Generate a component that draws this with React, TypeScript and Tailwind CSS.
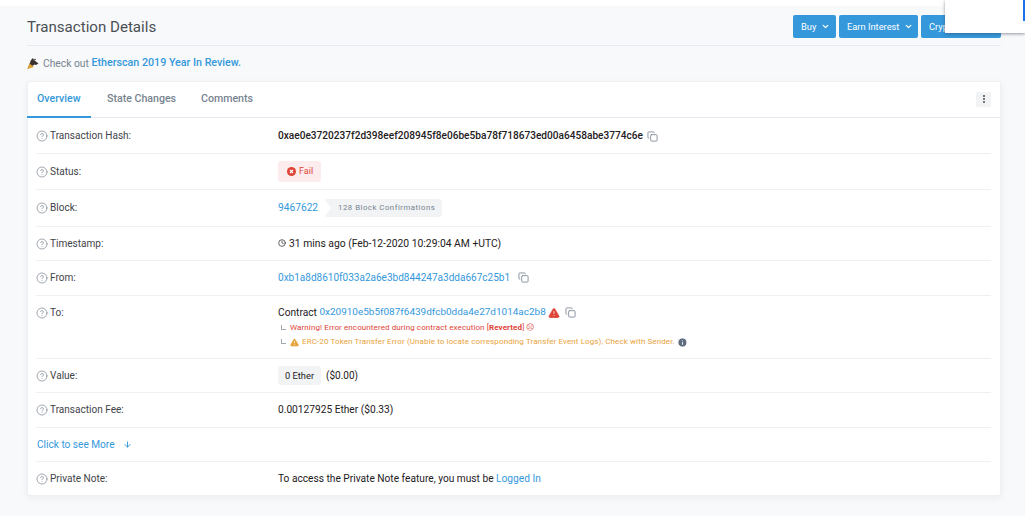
import { ArrowDown, ChevronDown, Clock, Copy, EllipsisVertical, Info, TriangleAlert, CircleHelp } from 'lucide-react';
import type { ReactNode } from 'react';

function Label({ text }: { text: string }) {
  return (
    <div className="w-[242px] shrink-0 flex items-center text-[10.05px] text-[#3f444a]">
      <CircleHelp size={12} strokeWidth={1.4} className="text-[#77838f] mr-[2px]" />
      <span>{text}</span>
    </div>
  );
}

function Row({ label, height, children, top }: { label: string; height: string; children: ReactNode; top?: boolean }) {
  return (
    <div className={`${height} flex ${top ? 'items-start pt-[9px]' : 'items-center'} border-b border-[#eef0f3]`}>
      <Label text={label} />
      <div className="flex-1 min-w-0">{children}</div>
    </div>
  );
}

function CopyIcon({ className }: { className: string }) {
  return <Copy size={11} strokeWidth={1.8} className={`text-[#77838f] ${className}`} />;
}

function NavButton({ label, className }: { label: string; className: string }) {
  return (
    <div className={`h-[23px] flex items-center whitespace-nowrap bg-[#3498db] rounded-[2px] text-white text-[9.3px] ${className}`}>
      <span>{label}</span>
      <ChevronDown size={9} strokeWidth={3.5} className="ml-[5px]" />
    </div>
  );
}

export default function App() {
  return (
    <div className="relative w-[1025px] h-[516px] overflow-hidden bg-white font-['Roboto',sans-serif]">
      <div className="mt-[6px] h-[510px] bg-[#f8f9fa] pl-[27px] pr-[24px] pt-[2px]">
        <div className="h-[38px] flex items-center justify-between border-b border-[#e7eaf3]">
          <h1 className="text-[15.1px] text-[#4a4f55] mt-[1px]">Transaction Details</h1>
          <div className="flex gap-[3px]">
            <NavButton label="Buy" className="w-[43px] pl-[8px]" />
            <NavButton label="Earn Interest" className="w-[79px] pl-[8px]" />
            <NavButton label="Crypto" className="w-[80px] pl-[8px]" />
          </div>
        </div>

        <div className="h-[35px] flex items-center text-[10.3px] text-[#77838f]">
          <svg width="12" height="13" viewBox="0 0 12 13" className="mr-[4px]">
            <path d="M0.5 12 L4 3 L6 1 L7 3 L11.5 6.5 L9 8 L7.5 7.5 Z" fill="#3a3330" />
            <path d="M0.5 12 L2.5 6.5 L7 10 Z" fill="#e0a030" />
            <circle cx="8" cy="2.5" r="0.8" fill="#3a3330" />
          </svg>
          <span>Check out&nbsp;</span>
          <span className="font-medium text-[10.7px] text-[#3498db]">Etherscan 2019 Year In Review.</span>
        </div>

        <div className="h-[415px] bg-white border border-[#eef0f3] rounded-[3px] shadow-[0_2px_6px_rgba(140,152,164,0.12)] text-[10.2px] text-[#1e2022]">
          <div className="h-[36px] pb-px flex items-center border-b border-[#e7eaf3] text-[10.6px] font-medium text-[#77838f]">
            <div className="relative h-full w-[64px] flex items-center pl-[9px] text-[#3498db]">
              Overview
              <span className="absolute left-[-1px] right-[1px] -bottom-[2px] h-[2px] bg-[#3498db]" />
            </div>
            <span className="ml-[15px]">State Changes</span>
            <span className="ml-[25px]">Comments</span>
            <div className="ml-auto mr-[9px] w-[15px] h-[15px] flex items-center justify-center bg-[#f1f3f5] rounded-[2px]">
              <EllipsisVertical size={10} strokeWidth={3} className="text-[#4a4f55]" />
            </div>
          </div>

          <div className="pl-[8px] pr-[9px]">
            <Row label="Transaction Hash:" height="h-[36px] pt-px">
              <div className="flex items-center">
                <span className="font-medium text-[10.12px]">0xae0e3720237f2d398eef208945f8e06be5ba78f718673ed00a6458abe3774c6e</span>
                <CopyIcon className="ml-[4px]" />
              </div>
            </Row>
            <Row label="Status:" height="h-[36px]">
              <span className="inline-flex items-center h-[21px] pl-[9px] pr-[8px] bg-[#fdeced] rounded-[3px] text-[9px] text-[#de4437]">
                <svg width="9" height="9" viewBox="0 0 9 9" className="mr-[3px]">
                  <circle cx="4.5" cy="4.5" r="4.5" fill="#de4437" />
                  <path d="M3 3 L6 6 M6 3 L3 6" stroke="#fff" strokeWidth="1.2" />
                </svg>
                Fail
              </span>
            </Row>
            <Row label="Block:" height="h-[37px]">
              <div className="flex items-center">
                <span className="text-[#3498db]">9467622</span>
                <div className="ml-[6px] h-[18px] flex items-center bg-[#f1f3f5] rounded-[3px] pl-[14px] pr-[7px] text-[7.8px] tracking-[0.5px] text-[#77838f] [clip-path:polygon(0_0,100%_0,100%_100%,0_100%,7px_50%)]">
                  128 Block Confirmations
                </div>
              </div>
            </Row>
            <Row label="Timestamp:" height="h-[34px]">
              <div className="flex items-center">
                <Clock size={8} strokeWidth={2} className="mr-[3px]" />
                <span className="text-[10.34px]">31 mins ago (Feb-12-2020 10:29:04 AM +UTC)</span>
              </div>
            </Row>
            <Row label="From:" height="h-[35px]">
              <div className="flex items-center">
                <span className="text-[10.02px] text-[#3498db]">0xb1a8d8610f033a2a6e3bd844247a3dda667c25b1</span>
                <CopyIcon className="ml-[8px]" />
              </div>
            </Row>
            <Row label="To:" height="h-[63px]" top>
              <div className="flex items-center">
                <span>Contract&nbsp;</span>
                <span className="text-[9.97px] text-[#3498db]">0x20910e5b5f087f6439dfcb0dda4e27d1014ac2b8</span>
                <TriangleAlert size={12} fill="#de4437" stroke="#de4437" strokeWidth={1.5} className="ml-[2px] [&>path:not(:first-child)]:stroke-white" />
                <CopyIcon className="ml-[5px]" />
              </div>
              <div className="flex items-center mt-[2px] text-[8px] tracking-[0.1px] text-[#de4437]">
                <span className="w-[5px] h-[5px] ml-[3px] mr-[4px] mb-[2px] border-l border-b border-[#a0a8b0]" />
                <span>Warning! Error encountered during contract execution [<span className="font-bold">Reverted</span>] ☹</span>
              </div>
              <div className="flex items-center mt-[2px] text-[8px] tracking-[0.11px] text-[#e8a33d]">
                <span className="w-[5px] h-[5px] ml-[3px] mr-[4px] mb-[2px] border-l border-b border-[#a0a8b0]" />
                <TriangleAlert size={9} fill="#e8a33d" stroke="#e8a33d" className="mr-[3px] [&>path:not(:first-child)]:stroke-white" />
                <span>ERC-20 Token Transfer Error (Unable to locate corresponding Transfer Event Logs), Check with Sender.</span>
                <Info size={11} fill="#5f6d80" stroke="#fff" strokeWidth={2} className="ml-[2px]" />
              </div>
            </Row>
            <Row label="Value:" height="h-[34px]">
              <div className="flex items-center">
                <span className="h-[19px] px-[7px] flex items-center bg-[#f1f3f5] rounded-[3px] text-[9.3px]">0 Ether</span>
                <span className="ml-[5px] text-[10px]">($0.00)</span>
              </div>
            </Row>
            <Row label="Transaction Fee:" height="h-[35px]">
              <span className="text-[10.18px]">0.00127925 Ether ($0.33)</span>
            </Row>
            <div className="h-[34px] pl-px flex items-center border-b border-[#eef0f3] text-[10.1px] text-[#3498db]">
              <span>Click to see More</span>
              <ArrowDown size={9} strokeWidth={2.5} className="ml-[8px]" />
            </div>
            <Row label="Private Note:" height="h-[33px] !border-b-0">
              <span className="text-[10.18px]">To access the Private Note feature, you must be <span className="text-[#3498db]">Logged In</span></span>
            </Row>
          </div>
        </div>
      </div>

      <div className="absolute left-[945px] top-0 w-[80px] h-[33px] bg-white shadow-[0_1px_3px_rgba(60,70,90,0.55)]">
        <span className="absolute right-0 top-0 w-[2px] h-[21px] bg-[#1a73e8]" />
      </div>
    </div>
  );
}
